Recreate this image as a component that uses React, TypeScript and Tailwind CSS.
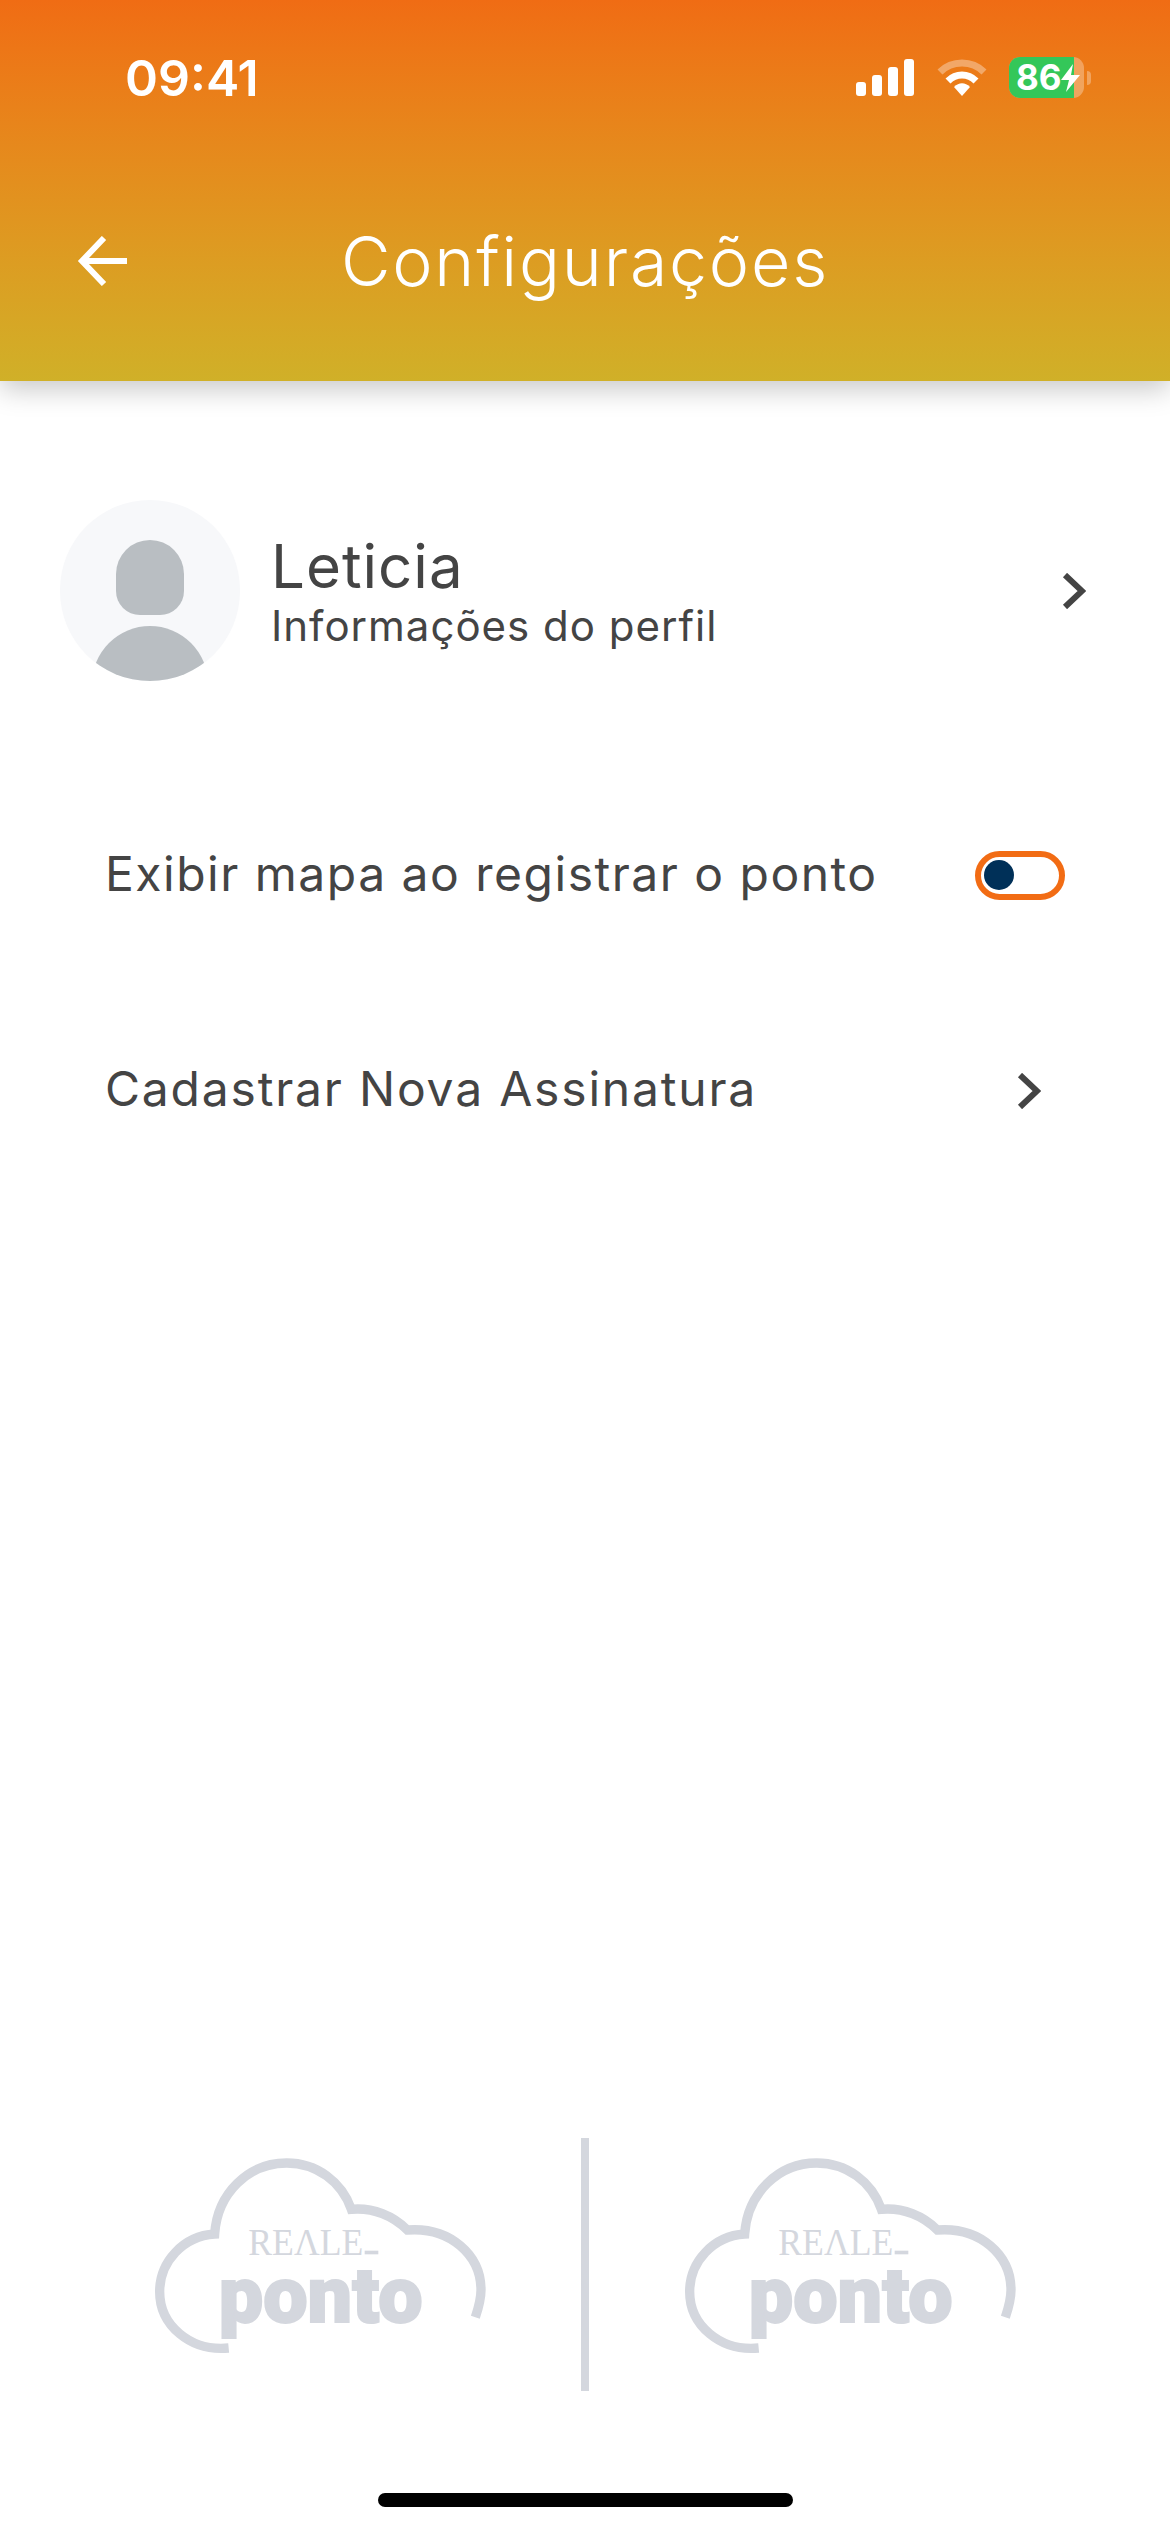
function CloudLogo() {
    return (
        <svg width="400" height="260" viewBox="0 0 1200 780" className="shrink-0">
            <path
                d="M296 654 C180 665 89 585 89 485 C89 395 160 318 254 312 C262 190 355 99 470 99 C560 99 635 155 664 238 C730 232 790 258 832 300 C960 290 1053 375 1053 480 C1053 510 1045 535 1036 562"
                fill="none"
                stroke="#d4d7de"
                strokeWidth="28"
            />
            <text
                x="355"
                y="374"
                textLength="345"
                lengthAdjust="spacingAndGlyphs"
                fontSize="112"
                fill="#d4d7de"
                fontFamily="'Liberation Serif', serif"
            >
                REΛLE
            </text>
            <rect x="704" y="362" width="41" height="11" fill="#d4d7de" />
            <text
                x="266"
                y="577"
                textLength="612"
                lengthAdjust="spacingAndGlyphs"
                fontSize="236"
                fontWeight="900"
                fill="#d4d7de"
                stroke="#d4d7de"
                strokeWidth="6"
                fontFamily="Roboto, sans-serif"
            >
                ponto
            </text>
        </svg>
    );
}

function Chevron() {
    return (
        <svg width="24" height="36" viewBox="0 0 24 36" className="shrink-0">
            <path d="M3 2 L20 18 L3 34" fill="none" stroke="#444444" strokeWidth="6" />
        </svg>
    );
}

function StatusIcons() {
    return (
        <div className="flex items-center">
            <svg width="58" height="37" viewBox="0 0 58 37" fill="#ffffff">
                <rect x="0" y="23" width="10" height="14" rx="3" />
                <rect x="16" y="16" width="10" height="21" rx="3" />
                <rect x="32" y="8" width="10" height="29" rx="3" />
                <rect x="48" y="0" width="10" height="37" rx="3" />
            </svg>
            <svg width="50" height="37" viewBox="0 0 50 37" fill="none" className="ml-[23px]">
                <path d="M3 13 C15 1 35 1 47 13" stroke="#ffffff" strokeOpacity="0.35" strokeWidth="7" />
                <path d="M11 22 C19 14 31 14 39 22" stroke="#ffffff" strokeWidth="7" />
                <path d="M17 28 C22 23 28 23 33 28 L25 37 Z" fill="#ffffff" />
            </svg>
            <div className="relative ml-[22px] flex h-[41px] w-[75px] items-center overflow-hidden rounded-[11px] bg-white/30">
                <div className="h-full w-[65px] bg-[#34c759]"></div>
                <span className="absolute left-[7px] top-0 text-[35px] leading-[41px] font-bold text-white font-['Inter',sans-serif]">
                    86
                </span>
                <svg width="19" height="28" viewBox="0 0 19 28" className="absolute left-[52px] top-[7px]" fill="#ffffff">
                    <path d="M12 0 L0 16 H8 L5 28 L19 11 H10 Z" />
                </svg>
            </div>
            <div className="ml-[3px] h-[14px] w-[4px] rounded-r-full bg-white/30"></div>
        </div>
    );
}

export default function App() {
    return (
        <div className="flex h-[2532px] w-[1170px] flex-col overflow-hidden bg-white font-['Inter',sans-serif] text-[#444444]">
            <header className="h-[381px] shrink-0 bg-gradient-to-b from-[#f06c14] to-[#d0b028] shadow-[0_8px_26px_rgba(0,0,0,0.22)]">
                <div className="flex h-[157px] items-start justify-between pl-[125px] pr-[79px] pt-[48px]">
                    <span className="text-[50px] leading-[60px] font-semibold text-white">09:41</span>
                    <div className="pt-[9px]">
                        <StatusIcons />
                    </div>
                </div>
                <div className="relative flex h-[208px] items-center justify-center">
                    <svg width="52" height="50" viewBox="0 0 52 50" className="absolute left-[77px] top-[79px]" fill="none">
                        <path d="M50 25 H5 M27 2 L5 25 L27 48" stroke="#ffffff" strokeWidth="6" />
                    </svg>
                    <h1 className="text-[68px] leading-[80px] font-light tracking-[1.8px] text-white">Configurações</h1>
                </div>
            </header>

            <div className="flex items-center pl-[60px] pr-[84px] pt-[119px]">
                <div className="relative h-[181px] w-[180px] shrink-0 overflow-hidden rounded-full bg-[#f7f8fa]">
                    <div className="absolute left-[56px] top-[40px] h-[75px] w-[68px] rounded-t-[34px] rounded-b-[24px] bg-[#b9bec2]"></div>
                    <div className="absolute left-[32px] top-[126px] h-[120px] w-[116px] rounded-full bg-[#b9bec2]"></div>
                </div>
                <div className="ml-[31px] flex flex-1 flex-col">
                    <span className="text-[60px] leading-[70px] font-normal tracking-[1px]">Leticia</span>
                    <span className="text-[42px] leading-[50px] font-normal tracking-[1px]">Informações do perfil</span>
                </div>
                <Chevron />
            </div>

            <div className="mt-[143px] flex h-[100px] items-center justify-between pl-[105px] pr-[105px]">
                <span className="text-[48px] font-normal tracking-[1.5px]">Exibir mapa ao registrar o ponto</span>
                <div className="mt-[2px] flex h-[49px] w-[90px] items-center rounded-full border-[6px] border-[#f26c14] pl-[3px]">
                    <div className="h-[30px] w-[30px] rounded-full bg-[#003058]"></div>
                </div>
            </div>

            <div className="mt-[115px] flex h-[100px] items-center justify-between pl-[105px] pr-[129px]">
                <span className="text-[48px] font-normal tracking-[1.8px]">Cadastrar Nova Assinatura</span>
                <div className="mt-[4px]">
                    <Chevron />
                </div>
            </div>

            <div className="mt-auto flex h-[261px] items-start pl-[130px]">
                <CloudLogo />
                <div className="ml-[51px] mr-[71px] mt-[8px] h-[253px] w-[8px] bg-[#d4d7de]"></div>
                <CloudLogo />
            </div>
            <div className="flex justify-center pb-[25px] pt-[102px]">
                <div className="h-[14px] w-[415px] rounded-full bg-black"></div>
            </div>
        </div>
    );
}
